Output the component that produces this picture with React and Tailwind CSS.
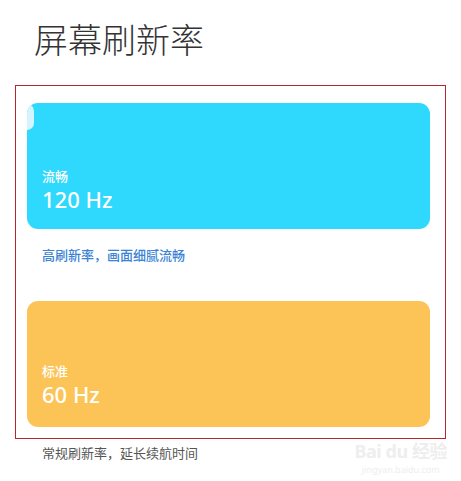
export default function App() {
  const font = { fontFamily: '"Noto Sans", "Noto Sans CJK SC", sans-serif' }

  return (
    <div className="relative w-[461px] h-[481px] bg-white overflow-hidden" style={font}>
      <h1 className="pl-[34px] pt-[19px] h-[85px] text-[34px] leading-[42px] font-light text-[#333]">
        屏幕刷新率
      </h1>

      <div className="ml-[15px] w-[431px] border border-[#b3282d] pl-[11px] pr-[15px] pt-[17px] pb-[11px]">
        <div className="relative h-[126px] rounded-[11px] bg-[#2fd8fd] px-[15px] flex flex-col justify-end pb-[16px] overflow-hidden">
          <div className="absolute -left-[7px] top-[1px] w-[14px] h-[26px] rounded-full bg-[#d4f5fd]" />
          <div className="text-[13px] leading-[18px] font-medium text-white">流畅</div>
          <div className="text-[22px] leading-[28px] font-medium text-white">120 Hz</div>
        </div>
        <p className="pl-[15px] pt-[17px] h-[72px] text-[13px] leading-[18px] text-[#3a82d4] font-medium">
          高刷新率，画面细腻流畅
        </p>
        <div className="h-[126px] rounded-[11px] bg-[#fcc456] px-[15px] flex flex-col justify-end pb-[19px]">
          <div className="text-[13px] leading-[18px] font-medium text-white">标准</div>
          <div className="text-[22px] leading-[28px] font-medium text-white">60 Hz</div>
        </div>
      </div>

      <p className="pl-[42px] pt-[5px] text-[13px] leading-[18px] text-[#555]">
        常规刷新率，延长续航时间
      </p>

      <div className="absolute right-[14px] top-[438px] flex flex-col items-center text-[#eeeeee] pointer-events-none">
        <div className="text-[18px] leading-[26px] font-bold tracking-tight">Bai du 经验</div>
        <div className="text-[9px] leading-[12px]">jingyan.baidu.com</div>
      </div>
    </div>
  )
}
